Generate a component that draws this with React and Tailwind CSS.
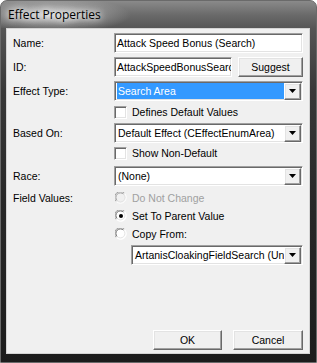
import React from "react";

const sunken =
  "border border-t-[#a0a0a0] border-l-[#a0a0a0] border-r-white border-b-white shadow-[inset_1px_1px_0_#696969,inset_-1px_-1px_0_#e3e3e3]";
const raised =
  "border border-t-white border-l-white border-r-[#696969] border-b-[#696969] shadow-[inset_-1px_-1px_0_#a0a0a0,inset_1px_1px_0_#e3e3e3] bg-[#f0f0f0]";

function DropBtn() {
  return (
    <div className={`w-[17px] h-[17px] shrink-0 flex items-center justify-center ${raised}`}>
      <svg width="7" height="4" viewBox="0 0 7 4">
        <polygon points="0,0 7,0 3.5,4" fill="#000" />
      </svg>
    </div>
  );
}

function Select({ text, highlight, className = "" }) {
  return (
    <div className={`h-[20px] bg-white flex items-center pl-[2px] pr-[1px] overflow-hidden ${sunken} ${className}`}>
      <div
        className={`flex-1 min-w-0 h-[16px] flex items-center pl-[1px] whitespace-nowrap overflow-hidden ${
          highlight ? "bg-[#3399ff] text-white" : ""
        }`}
      >
        {text}
      </div>
      <DropBtn />
    </div>
  );
}

function Checkbox({ label }) {
  return (
    <div className="flex items-center h-[13px] pl-[101px]">
      <div className={`w-[13px] h-[13px] bg-white shrink-0 ${sunken}`} />
      <span className="ml-[5px] whitespace-nowrap">{label}</span>
    </div>
  );
}

function Radio({ checked, disabled }) {
  const fill = disabled ? "#f0f0f0" : "#ffffff";
  return (
    <svg width="12" height="12" viewBox="0 0 12 12" className="shrink-0">
      <circle cx="6" cy="6" r="5.5" fill={fill} />
      <path d="M1.3 9.5 A5.5 5.5 0 0 1 9.5 1.3" stroke="#a0a0a0" strokeWidth="1" fill="none" />
      <path d="M2.2 8.6 A4.5 4.5 0 0 1 8.6 2.2" stroke={disabled ? "#a0a0a0" : "#696969"} strokeWidth="1" fill="none" />
      <path d="M9.5 1.3 A5.5 5.5 0 0 1 1.3 9.5" stroke="#ffffff" strokeWidth="1" fill="none" />
      <path d="M8.6 2.2 A4.5 4.5 0 0 1 2.2 8.6" stroke="#e3e3e3" strokeWidth="1" fill="none" />
      {checked && <circle cx="6" cy="6" r="2" fill="#000" />}
    </svg>
  );
}

function Row({ label, children, className = "" }) {
  return (
    <div className={`flex items-center h-[20px] ${className}`}>
      <div className="w-[101px] shrink-0 whitespace-nowrap">{label}</div>
      <div className="flex-1 min-w-0 flex h-full">{children}</div>
    </div>
  );
}

export default function App() {
  return (
    <div className="w-[317px] h-[363px] bg-white font-['Liberation_Sans',Arial,sans-serif] text-[10.5px] text-black leading-none">
      <div className="relative w-full h-full rounded-t-[7px] border border-[#6a6a6a] bg-[linear-gradient(180deg,#8a8a8a_0px,#6a6a6a_14px,#555555_28px,#383838_90px,#282828_200px,#1c1c1c_362px)] flex flex-col">
        <div className="h-[27px] shrink-0 flex items-center pl-[7px] bg-[radial-gradient(ellipse_80px_18px_at_50px_14px,rgba(230,230,230,0.85),rgba(200,200,200,0.35)_60%,rgba(0,0,0,0)_100%)] rounded-t-[6px]">
          <span className="font-['Open_Sans',sans-serif] text-[12px] text-black [text-shadow:0_0_6px_#fff,0_0_10px_#fff]">
            Effect Properties
          </span>
        </div>
        <div className="flex-1 ml-[5px] mr-[6px] mb-[8px] border border-[#d4d4d4] bg-[#f0f0f0] flex flex-col pl-[6px] pr-[6px] pb-[3px]">
          <Row label="Name:" className="mt-[4px]">
            <div className={`flex-1 bg-white flex items-center pl-[2px] whitespace-nowrap overflow-hidden ${sunken}`}>
              Attack Speed Bonus (Search)
            </div>
          </Row>
          <Row label="ID:" className="mt-[4px]">
            <div className={`w-[118px] bg-white flex items-center pl-[2px] whitespace-nowrap overflow-hidden ${sunken}`}>
              AttackSpeedBonusSearch
            </div>
            <button className={`ml-[6px] flex-1 flex items-center justify-center ${raised}`}>Suggest</button>
          </Row>
          <Row label="Effect Type:" className="mt-[4px]">
            <Select text="Search Area" highlight className="flex-1" />
          </Row>
          <div className="mt-[5px]">
            <Checkbox label="Defines Default Values" />
          </div>
          <Row label="Based On:" className="mt-[4px]">
            <Select text="Default Effect (CEffectEnumArea)" className="flex-1" />
          </Row>
          <div className="mt-[4px]">
            <Checkbox label="Show Non-Default" />
          </div>
          <Row label="Race:" className="mt-[6px]">
            <Select text="(None)" className="flex-1" />
          </Row>
          <div className="mt-[3px] flex">
            <div className="w-[101px] shrink-0 h-[18px] flex items-center">Field Values:</div>
            <div className="flex-1 min-w-0 flex flex-col">
              <div className="h-[18px] flex items-center pl-[1px] text-[#a0a0a0]">
                <Radio disabled />
                <span className="ml-[5px]">Do Not Change</span>
              </div>
              <div className="h-[18px] flex items-center pl-[1px]">
                <Radio checked />
                <span className="ml-[5px]">Set To Parent Value</span>
              </div>
              <div className="h-[18px] flex items-center pl-[1px]">
                <Radio />
                <span className="ml-[5px]">Copy From:</span>
              </div>
              <div className="mt-[2px] pl-[17px] flex">
                <Select text="ArtanisCloakingFieldSearch (Unit)" className="flex-1 min-w-0" />
              </div>
            </div>
          </div>
          <div className="mt-auto flex justify-end gap-[11px]">
            <button className={`w-[69px] h-[20px] flex items-center justify-center ${raised}`}>OK</button>
            <button className={`w-[70px] h-[20px] flex items-center justify-center ${raised}`}>Cancel</button>
          </div>
        </div>
      </div>
    </div>
  );
}
